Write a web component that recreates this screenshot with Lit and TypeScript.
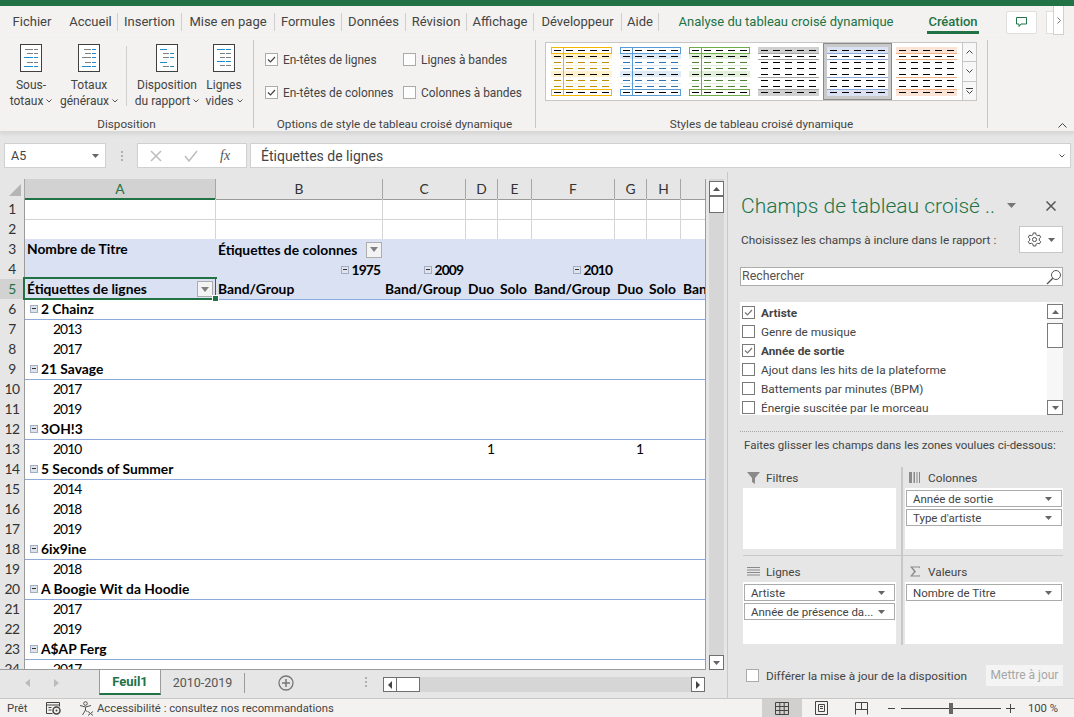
import { LitElement, html, css, svg } from "lit";
import { customElement } from "lit/decorators.js";

const TABS = [
  { t: "Accueil", w: 54 },
  { t: "Insertion", w: 64 },
  { t: "Mise en page", w: 93 },
  { t: "Formules", w: 67 },
  { t: "Données", w: 64 },
  { t: "Révision", w: 61 },
  { t: "Affichage", w: 67 },
  { t: "Développeur", w: 88 },
  { t: "Aide", w: 37 },
];

// rows of the little page icons: [from, to, colour]
type Seg = [number, number, string];
const G = "#7f7f7f";
const B = "#1e8bcd";
const PAGES: [number, Seg[]][][] = [
  [
    [5, [[5, 13, G], [14, 18, G]]],
    [9, [[7, 13, G], [14, 18, G]]],
    [13, [[4, 13, B], [14, 18, B]]],
    [18, [[7, 13, G], [14, 18, G]]],
    [22, [[4, 13, B], [14, 18, B]]],
  ],
  [
    [5, [[6, 13, G], [14, 18, B]]],
    [9, [[7, 13, G], [14, 18, B]]],
    [13, [[4, 13, G], [14, 18, B]]],
    [18, [[7, 13, G], [14, 18, B]]],
    [22, [[4, 13, B], [14, 18, B]]],
  ],
  [
    [5, [[4, 11, B]]],
    [9, [[7, 13, G], [14, 18, B]]],
    [13, [[7, 13, G], [14, 18, B]]],
    [18, [[4, 11, B]]],
    [22, [[7, 13, G], [14, 18, B]]],
  ],
  [
    [5, [[4, 12, B], [13, 18, B]]],
    [9, [[7, 12, G], [13, 18, G]]],
    [13, [[7, 12, G], [13, 18, G]]],
    [17, [[4, 12, B], [13, 18, B]]],
    [21, [[7, 12, G], [13, 18, G]]],
  ],
];

const pageIcon = (rows: [number, Seg[]][]) => html`<svg class="page" width="22" height="28" viewBox="0 0 22 28">
  <rect x="0.5" y="0.5" width="21" height="27" fill="#fff" stroke="#404040"></rect>
  ${rows.map(([y, segs]) =>
    segs.map(([a, b, c]) => svg`<rect x=${a} y=${y} width=${b - a} height="1" fill=${c}></rect>`)
  )}
</svg>`;

const DASH_X = [3, 15, 27, 39, 51];

const styleBoxed = (line: string, band: string, dash: string) => html`<svg width="61" height="49" viewBox="0 0 61 49">
  <rect y="6" width="61" height="6" fill=${band}></rect>
  <rect y="24" width="61" height="6" fill=${band}></rect>
  <rect y="18" width="61" height="1" fill=${band}></rect>
  <rect y="36" width="61" height="1" fill=${band}></rect>
  ${[0, 1, 2, 3, 4, 5, 6, 7].map((r) =>
    DASH_X.map((x) => {
      const dark = r === 0 || r === 1 || r === 4 || r === 7;
      return svg`<rect x=${x} y=${3 + r * 6} width="7" height="1" fill=${dark ? "#000" : dash}></rect>`;
    })
  )}
  <rect x="0.5" y="0.5" width="60" height="6" fill="none" stroke=${line}></rect>
  <rect x="0.5" y="42.5" width="60" height="6" fill="none" stroke=${line}></rect>
  <rect x="12" y="0" width="1" height="49" fill=${line}></rect>
</svg>`;

const styleRuled = (line: string, band: string) => html`<svg width="61" height="49" viewBox="0 0 61 49">
  <rect width="61" height="6" fill=${band}></rect>
  <rect y="43" width="61" height="6" fill=${band}></rect>
  ${[6, 12, 30, 42].map((y) => svg`<rect y=${y} width="61" height="1" fill=${line}></rect>`)}
  ${[0, 1, 2, 3, 4, 5, 6, 7].map((r) =>
    DASH_X.map((x) => svg`<rect x=${x} y=${3 + r * 6} width="7" height="1" fill="#000"></rect>`)
  )}
</svg>`;

const SWATCHES = [
  styleBoxed("#f2b800", "#fff2cc", "#bf9000"),
  styleBoxed("#5b9bd5", "#deeaf6", "#2e75b6"),
  styleBoxed("#70ad47", "#e2efd9", "#538135"),
  styleRuled("#a5a5a5", "#d0d0d0"),
  styleRuled("#8ea9db", "#d9e1f2"),
  styleRuled("#f4b183", "#fbe4d5"),
];

const caret = html`<svg class="caret" width="7" height="4" viewBox="0 0 7 4"><path d="M0 0h7L3.5 4z" fill="#666"></path></svg>`;
const chev = html`<svg class="chev" width="6" height="4" viewBox="0 0 6 4"><path d="M.5.5 3 3 5.5.5" fill="none" stroke="#555"></path></svg>`;
const check = html`<svg width="11" height="11" viewBox="0 0 11 11"><path d="M2 5.5 4.5 8 9 3" fill="none" stroke="currentColor" stroke-width="1.2"></path></svg>`;
const minus = html`<span class="minus"></span>`;
const filterBtn = html`<span class="fbtn"><svg width="8" height="5" viewBox="0 0 8 5"><path d="M0 0h8L4 5z" fill="#808080"></path></svg></span>`;

const NUM_COLS = ["A", "B", "C", "D", "E", "F", "G", "H", ""];

type Row = { n: number; kind: "grid" | "head" | "artist" | "year"; text?: string };
const BODY: [string, string[]][] = [
  ["2 Chainz", ["2013", "2017"]],
  ["21 Savage", ["2017", "2019"]],
  ["3OH!3", ["2010"]],
  ["5 Seconds of Summer", ["2014", "2018", "2019"]],
  ["6ix9ine", ["2018"]],
  ["A Boogie Wit da Hoodie", ["2017", "2019"]],
  ["A$AP Ferg", ["2017"]],
];

const bodyRows: Row[] = [];
let num = 6;
for (const [artist, years] of BODY) {
  bodyRows.push({ n: num++, kind: "artist", text: artist });
  for (const y of years) bodyRows.push({ n: num++, kind: "year", text: y });
}

@customElement("app-root")
export class AppRoot extends LitElement {
  static styles = css`
    :host {
      display: block;
      width: 1074px;
      height: 717px;
      overflow: hidden;
      background: #e6e6e6;
      font-family: Roboto, "Liberation Sans", sans-serif;
      font-size: 12px;
      color: #444;
    }
    svg { display: block; flex: none; }

    .titlebar { height: 6px; background: #217346; }

    .tabs {
      height: 32px;
      display: flex;
      align-items: center;
      background: #f3f2f1;
      font-size: 13px;
      color: #444;
    }
    .tab {
      height: 18px;
      line-height: 18px;
      text-align: center;
      box-sizing: border-box;
      border-right: 1px solid #d2d0ce;
      white-space: nowrap;
    }
    .tab.file { width: 52px; margin: 0 6px; border: 0; }
    .tab.plain { border: 0; color: #217346; }
    .tab.analyse { width: 232px; margin-left: 11px; }
    .tab.design { width: 66px; margin-left: 18px; font-weight: 500; }
    .tab.design span {
      display: inline-block;
      padding: 0 1px;
      box-shadow: 0 3px 0 #217346;
    }
    .comment {
      width: 31px;
      height: 23px;
      margin-left: 20px;
      box-sizing: border-box;
      background: #fff;
      border: 1px solid #e1dfdd;
      border-radius: 2px;
      display: flex;
      align-items: center;
      justify-content: center;
    }
    .share {
      width: 10px;
      height: 23px;
      margin-left: 9px;
      background: #fff;
      border: 1px solid #e1dfdd;
      box-sizing: border-box;
    }
    .more {
      width: 11px;
      height: 29px;
      margin: 0 0 3px -3px;
      box-sizing: border-box;
      background: #fff;
      border: 1px solid #d2d0ce;
      border-top: 0;
      display: flex;
      align-items: center;
      justify-content: center;
    }

    .ribbon {
      height: 93px;
      display: flex;
      background: #f3f2f1;
      border-bottom: 1px solid #d8d8d8;
      box-shadow: 0 2px 4px rgba(0, 0, 0, 0.08);
      position: relative;
    }
    .group {
      height: 88px;
      margin-top: 2px;
      box-sizing: border-box;
      border-right: 1px solid #c8c6c4;
      display: flex;
      flex-direction: column;
    }
    .group .body { flex: 1; display: flex; min-height: 0; }
    .group .label {
      height: 16px;
      line-height: 16px;
      margin-bottom: -4px;
      font-size: 11.7px;
      text-align: center;
      white-space: nowrap;
    }
    .g1 { width: 254px; }
    .g1 .body { padding: 4px 0 0 2px; }
    .g2 { width: 282px; }
    .g3 { width: 452px; }
    .g3 .body { padding: 2px 0 0 9px; }

    .rbtn {
      display: flex;
      flex-direction: column;
      align-items: center;
      line-height: 16px;
      white-space: nowrap;
    }
    .rbtn .page { margin-bottom: 5px; }
    .rbtn .l2 { display: flex; align-items: center; gap: 3px; }
    .b1, .b2 { width: 58px; }
    .b3 { width: 66px; }
    .b4 { width: 48px; }
    .rsep { width: 1px; height: 60px; background: #d2d0ce; margin: 2px 7px 0 8px; flex: none; }

    .opts {
      display: grid;
      grid-template-columns: 138px 130px;
      grid-auto-rows: 33px;
      padding: 3px 0 0 11px;
      align-content: start;
    }
    .opt { display: flex; align-items: center; gap: 5px; white-space: nowrap; height: 33px; font-size: 11.9px; }
    .box {
      width: 13px;
      height: 13px;
      flex: none;
      box-sizing: border-box;
      border: 1px solid #ababab;
      background: #fff;
      color: #444;
      display: flex;
      align-items: center;
      justify-content: center;
    }
    .opt .box { background: #fdfdfd; }

    .gallery {
      display: flex;
      height: 59px;
      width: 418px;
      box-sizing: border-box;
      border: 1px solid #c6c6c6;
      background: #fff;
      padding: 0 0 0 1px;
    }
    .sw {
      width: 69px;
      height: 57px;
      box-sizing: border-box;
      display: flex;
      align-items: center;
      justify-content: center;
      flex: none;
    }
    .sw.on { background: #c9c9c9; border: 1px solid #8a8a8a; }
    .sw.on svg { background: #fff; }
    .gscroll { display: flex; flex-direction: column; width: 14px; height: 59px; }
    .gscroll div {
      flex: 1;
      background: #f7f7f7;
      border: 1px solid #c6c6c6;
      border-left: 0;
      border-top: 0;
      display: flex;
      flex-direction: column;
      align-items: center;
      justify-content: center;
      gap: 1px;
    }
    .gscroll div:first-child { border-top: 1px solid #c6c6c6; }
    .collapse { margin: 85px 0 0 70px; width: 9px; height: 5px; }

    .fbar {
      height: 32px;
      padding: 3px 3px 4px 4px;
      box-sizing: border-box;
      display: flex;
      align-items: stretch;
      background: #e6e6e6;
      margin-top: 8px;
    }
    .fbar > * { box-sizing: border-box; background: #fff; border: 1px solid #d0d0d0; }
    .namebox {
      width: 102px;
      display: flex;
      align-items: center;
      justify-content: space-between;
      padding: 0 6px;
      font-size: 12.5px;
    }
    .fgrip {
      width: 31px;
      background: none;
      border: 0;
      display: flex;
      flex-direction: column;
      align-items: center;
      justify-content: center;
      gap: 2px;
    }
    .fgrip i { width: 2px; height: 2px; background: #b0b0b0; }
    .fbtns {
      width: 110px;
      display: flex;
      align-items: center;
      padding-left: 12px;
      gap: 22px;
      color: #bbb;
    }
    .fx { font-family: "Liberation Serif", serif; font-style: italic; color: #555; font-size: 14px; }
    .finput {
      margin-left: 3px;
      flex: 1;
      display: flex;
      align-items: center;
      justify-content: space-between;
      padding: 0 5px 0 10px;
      font-size: 14px;
      color: #444;
    }

    .main { display: flex; height: 526px; }
    .left { width: 727px; flex: none; display: flex; flex-direction: column; padding-top: 7px; box-sizing: border-box; }
    .sheet { display: flex; height: 491px; flex: none; }
    .grid {
      width: 706px;
      height: 491px;
      flex: none;
      overflow: hidden;
      box-sizing: border-box;
      background: #fff;
      border-right: 1px solid #9b9b9b;
      border-bottom: 1px solid #9b9b9b;
      font-family: Lato, "Liberation Sans", sans-serif;
      font-size: 13.8px;
      color: #000;
    }
    .row {
      display: grid;
      grid-template-columns: 25px 191px 167px 83px 32px 34px 83px 32px 34px 25px;
      height: 20px;
      line-height: 20px;
      white-space: nowrap;
    }
    .chead { background: #e6e6e6; color: #333; }
    .chead .c {
      text-align: center;
      box-sizing: border-box;
      border-right: 1px solid #a6a6a6;
      border-bottom: 1px solid #9b9b9b;
      line-height: 19px;
    }
    .chead .c:last-child { border-right: 0; }
    .chead .c.sel { background: #d2d2d2; color: #217346; border-bottom: 2px solid #217346; }
    .corner { display: flex; align-items: flex-end; justify-content: flex-end; padding: 0 3px 3px 0; }
    .rh {
      text-align: center;
      background: #e6e6e6;
      color: #333;
      box-sizing: border-box;
      letter-spacing: -0.6px;
      border-right: 1px solid #9b9b9b;
      border-bottom: 1px solid #c6c6c6;
    }
    .rh.sel { background: #d2d2d2; color: #217346; }
    .cell { box-sizing: border-box; padding: 0 2px; position: relative; min-width: 0; }
    .r-grid .cell { border-right: 1px solid #d4d4d4; border-bottom: 1px solid #d4d4d4; }
    .r-head .cell { background: #d9e1f2; font-weight: 700; }
    .r-head.last .cell, .r-artist .cell { border-bottom: 1px solid #8ea9db; }
    .r-artist .cell.a { font-weight: 700; padding-left: 5px; display: flex; align-items: center; }
    .r-year .cell.a { padding-left: 28px; letter-spacing: -0.9px; }
    .r-head .right { letter-spacing: -0.9px; }
    .right { padding-right: 3px; display: flex; align-items: center; justify-content: flex-end; }
    .val { text-align: right; padding-right: 1px; }
    .sb { display: flex; align-items: center; justify-content: space-between; padding-right: 1px; }
    .minus {
      display: inline-block;
      position: relative;
      width: 8px;
      height: 8px;
      box-sizing: border-box;
      border: 1px solid #a3adc2;
      background: #dfe3ec;
      margin-right: 3px;
      flex: none;
    }
    .minus::before {
      content: "";
      position: absolute;
      left: 1px;
      right: 1px;
      top: 2px;
      height: 1px;
      background: #333;
    }
    .fbtn {
      width: 16px;
      height: 16px;
      box-sizing: border-box;
      flex: none;
      background: #f3f3f3;
      border: 1px solid #adadad;
      display: flex;
      align-items: center;
      justify-content: center;
    }
    .a5 { display: flex; align-items: center; justify-content: space-between; padding-right: 3px; }
    .a5::after {
      content: "";
      position: absolute;
      inset: -2px -1px -1px -2px;
      border: 2px solid #217346;
      pointer-events: none;
    }
    .a5 b {
      position: absolute;
      right: -3px;
      bottom: -3px;
      width: 5px;
      height: 5px;
      background: #217346;
      border: 1px solid #fff;
      z-index: 1;
    }

    .vscroll {
      width: 15px;
      margin-left: 3px;
      flex: none;
      background: #d6d6d6;
      display: flex;
      flex-direction: column;
      padding-top: 2px;
      box-sizing: border-box;
    }
    .sbtn {
      background: #fff;
      border: 1px solid #6f6f6f;
      box-sizing: border-box;
      display: flex;
      align-items: center;
      justify-content: center;
      flex: none;
    }
    .vscroll .sbtn { height: 15px; }
    .vscroll .thumb { height: 17px; background: #fff; border: 1px solid #6f6f6f; box-sizing: border-box; }
    .vscroll .grow { flex: 1; }

    .tabbar { height: 28px; display: flex; align-items: flex-start; flex: none; }
    .nav { width: 99px; flex: none; height: 26px; display: flex; align-items: center; padding-left: 25px; gap: 24px; box-sizing: border-box; }
    .stab {
      height: 25px;
      line-height: 24px;
      text-align: center;
      box-sizing: border-box;
      color: #555;
      font-size: 12.5px;
    }
    .stab.on {
      width: 62px;
      background: #fff;
      color: #217346;
      font-weight: 700;
      font-size: 13px;
      border-left: 1px solid #9b9b9b;
      border-right: 1px solid #9b9b9b;
      border-bottom: 2px solid #217346;
    }
    .stab.off { width: 84px; border-right: 1px solid #9b9b9b; height: 20px; line-height: 20px; margin-top: 3px; }
    .plus { margin: 5px 0 0 33px; }
    .hgrip { margin: 7px 0 0 71px; display: flex; flex-direction: column; gap: 2px; }
    .hgrip i { width: 2px; height: 2px; background: #b0b0b0; }
    .hscroll { margin: 7px 0 0 16px; width: 322px; height: 15px; background: #d6d6d6; display: flex; justify-content: space-between; flex: none; }
    .hl { display: flex; }
    .hscroll .sbtn { width: 14px; height: 15px; }
    .hscroll .thumb { width: 23px; background: #fff; border: 1px solid #6f6f6f; border-left: 0; box-sizing: border-box; }

    .panel {
      flex: 1;
      min-width: 0;
      border-left: 1px solid #c8c8c8;
      padding: 17px 11px 0 12px;
      display: flex;
      flex-direction: column;
      font-size: 11.8px;
      color: #444;
    }
    .ptitle { height: 33px; display: flex; align-items: center; }
    .ptitle .t { width: 267px; font-size: 21px; font-weight: 300; color: #217346; white-space: nowrap; padding-left: 1px; box-sizing: border-box; }
    .ptitle .x { margin-left: 30px; }
    .choose { display: flex; align-items: center; justify-content: space-between; height: 27px; margin-top: 4px; padding-left: 1px; }
    .gear {
      width: 44px;
      height: 27px;
      box-sizing: border-box;
      background: #fff;
      border: 1px solid #c6c6c6;
      display: flex;
      align-items: center;
      justify-content: center;
      gap: 6px;
    }
    .search {
      height: 19px;
      margin-top: 14px;
      box-sizing: border-box;
      background: #fff;
      border: 1px solid #adadad;
      display: flex;
      align-items: center;
      justify-content: space-between;
      color: #555;
      padding-left: 1px;
      font-size: 12.4px;
    }
    .search span { padding-bottom: 2px; }
    .list { height: 113px; margin-top: 16px; background: #fff; display: flex; flex-shrink: 0; }
    .items { flex: 1; padding-top: 1px; overflow: hidden; }
    .item { height: 19px; display: flex; align-items: center; gap: 6px; padding-left: 2px; white-space: nowrap; }
    .item .box { border-color: #7a7a7a; color: #777; }
    .item.on { font-weight: 700; }
    .lscroll { width: 16px; background: #f7f7f7; display: flex; flex-direction: column; padding: 2px 0 0 0; box-sizing: border-box; }
    .lscroll .sbtn { height: 15px; border-color: #7a7a7a; }
    .lscroll .thumb { height: 25px; margin-top: 4px; background: #fff; border: 1px solid #7a7a7a; box-sizing: border-box; }
    .lscroll .grow { flex: 1; }
    .dots { height: 0; margin-top: 16px; border-top: 1px dotted #a6a6a6; }
    .hint { height: 16px; line-height: 16px; margin: 5px 0 0 4px; white-space: nowrap; font-size: 11.5px; }

    .zones {
      display: grid;
      grid-template-columns: 160px 160px;
      margin: 14px 0 0 3px;
    }
    .zone { display: flex; flex-direction: column; box-sizing: border-box; }
    .zone.l { border-right: 2px solid #c8c8c8; padding-right: 5px; }
    .zone.r { padding-left: 2px; }
    .zone.top { height: 88px; }
    .zone.bot { height: 89px; padding-top: 5px; }
    .hline { grid-column: 1 / 3; height: 1px; background: #c8c8c8; }
    .zh { height: 21px; display: flex; align-items: center; gap: 6px; padding-left: 4px; }
    .zh svg { width: 13px; }
    .zbox { background: #fff; flex: none; padding: 2px 1px; box-sizing: border-box; display: flex; flex-direction: column; gap: 2px; }
    .zone.top .zbox { height: 61px; }
    .zone.bot .zbox { height: 62px; }
    .pill {
      height: 17px;
      box-sizing: border-box;
      border: 1px solid #ababab;
      display: flex;
      align-items: center;
      justify-content: space-between;
      padding: 0 9px 0 6px;
      white-space: nowrap;
      font-size: 11.5px;
      color: #444;
    }
    .defer { display: flex; align-items: center; height: 21px; margin: 20px 0 0 6px; }
    .defer .box { border-color: #ababab; margin-right: 7px; }
    .update {
      margin-left: auto;
      width: 77px;
      height: 21px;
      line-height: 20px;
      text-align: center;
      background: #f4f4f4;
      color: #a6a6a6;
      font-size: 12px;
      white-space: nowrap;
    }

    .status {
      height: 19px;
      box-sizing: border-box;
      background: #f3f2f1;
      border-top: 1px solid #c8c8c8;
      display: flex;
      align-items: center;
      font-size: 11.3px;
      color: #444;
      padding-left: 7px;
    }
    .status .pret { width: 39px; }
    .status .acc { margin-left: 18px; margin-right: 3px; }
    .vw { width: 40px; height: 18px; display: flex; align-items: center; justify-content: center; }
    .vw.on { background: #d2d0ce; }
    .vw.first { margin-left: auto; }
    .zoom { display: flex; align-items: center; margin-left: 6px; }
    .track { width: 100px; height: 1px; background: #444; margin: 0 5px 0 6px; display: flex; align-items: center; justify-content: center; }
    .track i { width: 4px; height: 11px; background: #666; }
    .pct { margin: 0 16px 0 13px; white-space: nowrap; }
  `;

  private ribbonBtn(i: number, cls: string, l1: string, l2: string) {
    return html`<div class="rbtn ${cls}">
      ${pageIcon(PAGES[i])}
      <div>${l1}</div>
      <div class="l2">${l2} ${chev}</div>
    </div>`;
  }

  private ribbon() {
    return html`<div class="ribbon">
      <div class="group g1">
        <div class="body">
          ${this.ribbonBtn(0, "b1", "Sous-", "totaux")}
          ${this.ribbonBtn(1, "b2", "Totaux", "généraux")}
          <div class="rsep"></div>
          ${this.ribbonBtn(2, "b3", "Disposition", "du rapport")}
          ${this.ribbonBtn(3, "b4", "Lignes", "vides")}
        </div>
        <div class="label">Disposition</div>
      </div>
      <div class="group g2">
        <div class="body">
          <div class="opts">
            <div class="opt"><span class="box">${check}</span>En-têtes de lignes</div>
            <div class="opt"><span class="box"></span>Lignes à bandes</div>
            <div class="opt"><span class="box">${check}</span>En-têtes de colonnes</div>
            <div class="opt"><span class="box"></span>Colonnes à bandes</div>
          </div>
        </div>
        <div class="label">Options de style de tableau croisé dynamique</div>
      </div>
      <div class="group g3">
        <div class="body">
          <div class="gallery">
            ${SWATCHES.map((s, i) => html`<div class="sw ${i === 4 ? "on" : ""}">${s}</div>`)}
          </div>
          <div class="gscroll">
            <div><svg width="7" height="4" viewBox="0 0 7 4"><path d="M.5 3.5 3.5.5l3 3" fill="none" stroke="#444"></path></svg></div>
            <div><svg width="7" height="4" viewBox="0 0 7 4"><path d="M.5.5l3 3 3-3" fill="none" stroke="#444"></path></svg></div>
            <div>
              <svg width="7" height="1" viewBox="0 0 7 1"><rect width="7" height="1" fill="#444"></rect></svg>
              <svg width="7" height="4" viewBox="0 0 7 4"><path d="M.5.5l3 3 3-3" fill="none" stroke="#444"></path></svg>
            </div>
          </div>
        </div>
        <div class="label">Styles de tableau croisé dynamique</div>
      </div>
      <svg class="collapse" width="9" height="5" viewBox="0 0 9 5"><path d="M.5 4.5l4-4 4 4" fill="none" stroke="#444"></path></svg>
    </div>`;
  }

  private formulaBar() {
    return html`<div class="fbar">
      <div class="namebox">A5 ${caret}</div>
      <div class="fgrip"><i></i><i></i><i></i></div>
      <div class="fbtns">
        <svg width="12" height="12" viewBox="0 0 12 12"><path d="M1 1l10 10M11 1 1 11" stroke="#bdbdbd" stroke-width="1.5"></path></svg>
        <svg width="14" height="12" viewBox="0 0 14 12"><path d="M1 6l4 5 8-10" fill="none" stroke="#bdbdbd" stroke-width="1.5"></path></svg>
        <span class="fx">fx</span>
      </div>
      <div class="finput">Étiquettes de lignes ${chev}</div>
    </div>`;
  }

  private grid() {
    const blank = (n: number) => html`<div class="row r-grid">
      <div class="rh">${n}</div>
      ${NUM_COLS.map(() => html`<div class="cell"></div>`)}
    </div>`;
    const cells = (vals: Record<number, unknown>) =>
      NUM_COLS.map((_, i) => html`<div class="cell ${i === 0 ? "a" : ""}">${vals[i] ?? ""}</div>`);
    return html`<div class="grid">
      <div class="row chead">
        <div class="c corner"><svg width="12" height="12" viewBox="0 0 12 12"><path d="M12 0v12H0z" fill="#b5b5b5"></path></svg></div>
        ${NUM_COLS.map((c, i) => html`<div class="c ${i === 0 ? "sel" : ""}">${c}</div>`)}
      </div>
      ${blank(1)} ${blank(2)}
      <div class="row r-head">
        <div class="rh">3</div>
        <div class="cell">Nombre de Titre</div>
        <div class="cell sb">Étiquettes de colonnes ${filterBtn}</div>
        ${NUM_COLS.slice(2).map(() => html`<div class="cell"></div>`)}
      </div>
      <div class="row r-head">
        <div class="rh">4</div>
        <div class="cell"></div>
        <div class="cell right">${minus}1975</div>
        <div class="cell right">${minus}2009</div>
        <div class="cell"></div>
        <div class="cell"></div>
        <div class="cell right">${minus}2010</div>
        <div class="cell"></div>
        <div class="cell"></div>
        <div class="cell"></div>
      </div>
      <div class="row r-head last">
        <div class="rh sel">5</div>
        <div class="cell a5">Étiquettes de lignes ${filterBtn}<b></b></div>
        ${["Band/Group", "Band/Group", "Duo", "Solo", "Band/Group", "Duo", "Solo", "Band/Group"].map(
          (t) => html`<div class="cell">${t}</div>`
        )}
      </div>
      ${bodyRows.map(
        (r) => html`<div class="row r-${r.kind}">
          <div class="rh">${r.n}</div>
          ${r.kind === "artist"
            ? cells({ 0: html`${minus}${r.text}` })
            : cells(r.n === 13 ? { 0: r.text, 3: html`<div class="val">1</div>`, 6: html`<div class="val">1</div>` } : { 0: r.text })}
        </div>`
      )}
      <div class="row r-year">
        <div class="rh">24</div>
        ${cells({ 0: "2017" })}
      </div>
    </div>`;
  }

  private tabBar() {
    const tri = (d: string, f: string) => html`<svg width="5" height="8" viewBox="0 0 5 8"><path d=${d} fill=${f}></path></svg>`;
    return html`<div class="tabbar">
      <div class="nav">${tri("M5 0v8L0 4z", "#bbb")} ${tri("M0 0v8l5-4z", "#bbb")}</div>
      <div class="stab on">Feuil1</div>
      <div class="stab off">2010-2019</div>
      <svg class="plus" width="16" height="16" viewBox="0 0 16 16"><circle cx="8" cy="8" r="7" fill="none" stroke="#777" stroke-width="1.3"></circle><path d="M8 4v8M4 8h8" stroke="#777" stroke-width="1.5"></path></svg>
      <div class="hgrip"><i></i><i></i><i></i></div>
      <div class="hscroll">
        <div class="hl">
          <div class="sbtn">${tri("M4 0v8L0 4z", "#444")}</div>
          <div class="thumb"></div>
        </div>
        <div class="sbtn">${tri("M0 0v8l4-4z", "#444")}</div>
      </div>
    </div>`;
  }

  private panel() {
    const items: [string, boolean][] = [
      ["Artiste", true],
      ["Genre de musique", false],
      ["Année de sortie", true],
      ["Ajout dans les hits de la plateforme", false],
      ["Battements par minutes (BPM)", false],
      ["Énergie suscitée par le morceau", false],
    ];
    const up = html`<svg width="7" height="4" viewBox="0 0 7 4"><path d="M0 4h7L3.5 0z" fill="#666"></path></svg>`;
    const pill = (t: string) => html`<div class="pill"><span>${t}</span>${caret}</div>`;
    return html`<div class="panel">
      <div class="ptitle">
        <div class="t">Champs de tableau croisé ..</div>
        <svg width="9" height="5" viewBox="0 0 9 5"><path d="M0 0h9L4.5 5z" fill="#777"></path></svg>
        <svg class="x" width="10" height="10" viewBox="0 0 10 10"><path d="M.5.5l9 9M9.5.5l-9 9" stroke="#555" stroke-width="1.5"></path></svg>
      </div>
      <div class="choose">
        <span>Choisissez les champs à inclure dans le rapport :</span>
        <div class="gear">
          <svg width="15" height="15" viewBox="0 0 16 16"><path d="M6.7 1h2.600l.4 2 1.600.9 2-.6 1.300 2.300-1.500 1.400v1.900l1.500 1.400-1.300 2.300-2-.6-1.600.9-.4 2H6.700l-.4-2-1.600-.9-2 .6-1.300-2.300 1.500-1.400V7L1.400 5.600l1.300-2.300 2 .6 1.600-.9z" fill="none" stroke="#444"></path><circle cx="8" cy="8" r="2.200" fill="none" stroke="#444"></circle></svg>
          ${caret}
        </div>
      </div>
      <div class="search">
        <span>Rechercher</span>
        <svg width="16" height="16" viewBox="0 0 16 16"><circle cx="10" cy="6" r="4.500" fill="none" stroke="#555"></circle><path d="M6.800 9.200 1 15" stroke="#555" stroke-width="1.300"></path></svg>
      </div>
      <div class="list">
        <div class="items">
          ${items.map(
            ([t, on]) => html`<div class="item ${on ? "on" : ""}"><span class="box">${on ? check : ""}</span>${t}</div>`
          )}
        </div>
        <div class="lscroll">
          <div class="sbtn">${up}</div>
          <div class="thumb"></div>
          <div class="grow"></div>
          <div class="sbtn">${caret}</div>
        </div>
      </div>
      <div class="dots"></div>
      <div class="hint">Faites glisser les champs dans les zones voulues ci-dessous:</div>
      <div class="zones">
        <div class="zone l top">
          <div class="zh">
            <svg width="13" height="13" viewBox="0 0 13 13"><path d="M0 1h13L8 7v6L5 11V7z" fill="#8a8a8a"></path></svg>
            Filtres
          </div>
          <div class="zbox"></div>
        </div>
        <div class="zone r top">
          <div class="zh">
            <svg width="13" height="11" viewBox="0 0 13 11"><path d="M0 0h3v11H0zM4.500 0h1.500v11H4.500zM7.500 0h1v11h-1zM10 0h1v11h-1z" fill="#8a8a8a"></path></svg>
            Colonnes
          </div>
          <div class="zbox">${pill("Année de sortie")} ${pill("Type d'artiste")}</div>
        </div>
        <div class="hline"></div>
        <div class="zone l bot">
          <div class="zh">
            <svg width="13" height="9" viewBox="0 0 13 9"><path d="M0 0h13v1H0zM0 2.500h13v1H0zM0 5h13v1H0zM0 7.500h13v1H0z" fill="#8a8a8a"></path></svg>
            Lignes
          </div>
          <div class="zbox">${pill("Artiste")} ${pill("Année de présence da...")}</div>
        </div>
        <div class="zone r bot">
          <div class="zh">
            <svg width="13" height="11" viewBox="0 0 13 11"><path d="M1 .5h10v2L10 1.500H3.500L7 5.500 3.500 9.500H10.500l.5-1v2H1l4-5z" fill="#8a8a8a"></path></svg>
            Valeurs
          </div>
          <div class="zbox">${pill("Nombre de Titre")}</div>
        </div>
      </div>
      <div class="defer">
        <span class="box"></span>
        <span>Différer la mise à jour de la disposition</span>
        <div class="update">Mettre à jour</div>
      </div>
    </div>`;
  }

  private status() {
    return html`<div class="status">
      <span class="pret">Prêt</span>
      <svg width="15" height="13" viewBox="0 0 15 13"><path d="M.500.500h13v4M.500.500v11h6M.500 3h13M2.500 5.500h3M2.500 8h3" fill="none" stroke="#444"></path><circle cx="10.500" cy="8.500" r="3.500" fill="none" stroke="#444" stroke-width="1.500"></circle><circle cx="10.500" cy="8.500" r="1" fill="#444"></circle></svg>
      <svg class="acc" width="15" height="15" viewBox="0 0 15 15"><circle cx="6.500" cy="2.500" r="1.800" fill="none" stroke="#555"></circle><path d="M1 4.500 6.500 6 12 4.500M6.500 6v3L3.500 14M6.500 9l2 2" fill="none" stroke="#555"></path><path d="M9 10.500l5 4M14 10.500l-5 4" stroke="#555"></path></svg>
      <span>Accessibilité : consultez nos recommandations</span>
      <div class="vw first on"><svg width="14" height="13" viewBox="0 0 14 13"><path d="M.500.500h13v12H.500zM.500 4.500h13M.500 8.500h13M4.800.500v12M9.200.500v12" fill="none" stroke="#444"></path></svg></div>
      <div class="vw"><svg width="13" height="14" viewBox="0 0 13 14"><path d="M.500.500h12v13H.500z" fill="none" stroke="#444"></path><path d="M3.500 3.500h6v7h-6zM5 5.500h3M5 7.500h3" fill="none" stroke="#444"></path></svg></div>
      <div class="vw"><svg width="13" height="13" viewBox="0 0 13 13"><path d="M.500 12.500V.500h12v12M.500 7.500h12M6.500.500v7" fill="none" stroke="#444"></path></svg></div>
      <div class="zoom">
        <svg width="7" height="1" viewBox="0 0 7 1"><rect width="7" height="1" fill="#444"></rect></svg>
        <div class="track"><i></i></div>
        <svg width="9" height="9" viewBox="0 0 9 9"><path d="M0 4.500h9M4.500 0v9" stroke="#444"></path></svg>
      </div>
      <span class="pct">100 %</span>
    </div>`;
  }

  render() {
    return html`
      <div class="titlebar"></div>
      <div class="tabs">
        <div class="tab file">Fichier</div>
        ${TABS.map((t) => html`<div class="tab" style="width:${t.w}px">${t.t}</div>`)}
        <div class="tab plain analyse">Analyse du tableau croisé dynamique</div>
        <div class="tab plain design"><span>Création</span></div>
        <div class="comment"><svg width="11" height="10" viewBox="0 0 11 10"><path d="M.500.500h10v6.500H5L3 9.500V7H.500z" fill="none" stroke="#217346"></path></svg></div>
        <div class="share"></div>
        <div class="more"><svg width="4" height="7" viewBox="0 0 4 7"><path d="M.500.500l3 3-3 3" fill="none" stroke="#777"></path></svg></div>
      </div>
      ${this.ribbon()}
      ${this.formulaBar()}
      <div class="main">
        <div class="left">
          <div class="sheet">
            ${this.grid()}
            <div class="vscroll">
              <div class="sbtn"><svg width="7" height="4" viewBox="0 0 7 4"><path d="M0 4h7L3.500 0z" fill="#555"></path></svg></div>
              <div class="thumb"></div>
              <div class="grow"></div>
              <div class="sbtn">${caret}</div>
            </div>
          </div>
          ${this.tabBar()}
        </div>
        ${this.panel()}
      </div>
      ${this.status()}
    `;
  }
}
